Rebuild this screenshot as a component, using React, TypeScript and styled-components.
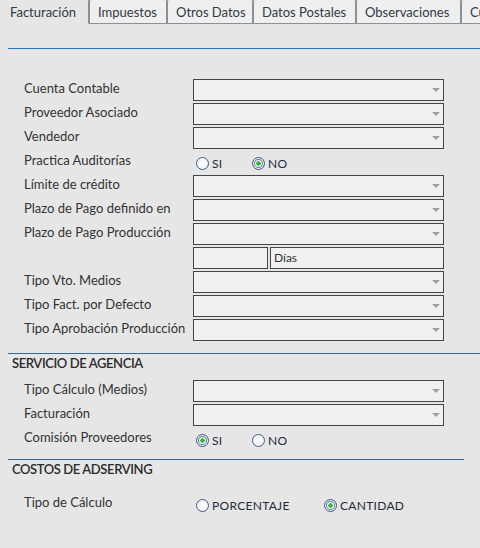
import React from 'react'
import styled, { createGlobalStyle } from 'styled-components'

const GlobalStyle = createGlobalStyle`
    body {
        margin: 0;
        background: #e6e6e6;
        font-family: Lato, "Open Sans", sans-serif;
        overflow: hidden;
    }
`

const Page = styled.div`
    width: 480px;
    height: 548px;
    background: #e6e6e6;
    color: #333;
`

const TabBar = styled.div`
    display: flex;
    height: 24px;
    overflow: hidden;
    white-space: nowrap;
`

const Tab = styled.div<{ $active?: boolean; $width: number }>`
    flex: none;
    box-sizing: border-box;
    width: ${p => p.$width}px;
    height: 27px;
    margin-top: -3px;
    padding: 5px 0 0 ${p => (p.$active ? 10 : 9)}px;
    font-size: 13px;
    line-height: 18px;
    color: #2f3a45;
    overflow: hidden;
    border: 1px solid #8a9097;
    border-left: none;
    border-top-right-radius: 5px;
    border-top-left-radius: ${p => (p.$active ? '0' : '5px')};
    border-bottom-color: ${p => (p.$active ? 'transparent' : '#8a9097')};
    background: ${p => (p.$active ? '#e6e6e6' : '#efefef')};
    box-shadow: ${p => (p.$active ? 'none' : 'inset 1px 0 0 0 #8a9097')};
`

const TabFiller = styled.div`
    flex: 1;
    border-bottom: 1px solid #8a9097;
`

const Panel = styled.div`
    padding: 24px 0 0 8px;
`

const Rule = styled.div<{ $width?: number }>`
    height: 0;
    border-top: 1px solid ${p => (p.$width ? '#2d6a98' : '#1f78c8')};
    width: ${p => (p.$width ? `${p.$width}px` : 'auto')};
`

const Spacer = styled.div<{ $h: number }>`
    height: ${p => p.$h}px;
`

const Form = styled.div`
    display: flex;
    flex-direction: column;
    padding-top: 30px;
`

const Row = styled.div`
    display: grid;
    grid-template-columns: 169px 251px;
    align-items: center;
    height: 22px;
    margin-bottom: 2px;
    padding-left: 16px;
`

const Label = styled.div`
    font-size: 13px;
    color: #333;
    margin-top: -4px;
    white-space: nowrap;
`

const Select = styled.div`
    position: relative;
    box-sizing: border-box;
    height: 22px;
    border: 1px solid #444;
    background: #f0f0f0;
`

const Arrow = styled.span`
    position: absolute;
    right: 3px;
    top: 8px;
    width: 0;
    height: 0;
    border-left: 4px solid transparent;
    border-right: 4px solid transparent;
    border-top: 4px solid #a0a0a0;
`

const Split = styled.div`
    display: grid;
    grid-template-columns: 75px 1fr;
    gap: 2px;
`

const TextBox = styled.div`
    box-sizing: border-box;
    height: 22px;
    border: 1px solid #444;
    background: #f0f0f0;
    font-size: 12px;
    line-height: 20px;
    padding-left: 3px;
    color: #333;
`

const RadioGroup = styled.div`
    display: flex;
    align-items: center;
    padding-left: 3px;
    margin-top: 2px;
`

const RadioItem = styled.label<{ $width: number }>`
    display: flex;
    align-items: center;
    width: ${p => p.$width}px;
    font-size: 12px;
    color: #1f2c3c;
    letter-spacing: 0.3px;
`

const Circle = styled.span<{ $on?: boolean }>`
    box-sizing: border-box;
    width: 13px;
    height: 13px;
    margin-right: 3px;
    border-radius: 50%;
    border: 1px solid #3d5d86;
    background: radial-gradient(circle, ${p => (p.$on ? '#3bb43b 0 2px, #ffffff 2.5px' : '#ffffff 0')} , #e9eef4 100%);
    box-shadow: ${p => (p.$on ? 'inset 0 0 0 1px #fff, inset 0 0 0 2px #5a7aa0' : 'none')};
`

const SectionTitle = styled.div`
    font-size: 13px;
    font-weight: 600;
    letter-spacing: -0.4px;
    color: #2b2b2b;
    line-height: 18px;
    padding-left: 4px;
    margin-bottom: 8px;
`

const Radio: React.FC<{ label: string; on?: boolean; width: number }> = ({ label, on, width }) => (
    <RadioItem $width={width}>
        <Circle $on={on} />
        {label}
    </RadioItem>
)

const Combo: React.FC = () => (
    <Select>
        <Arrow />
    </Select>
)

const FieldRow: React.FC<{ label: string }> = ({ label }) => (
    <Row>
        <Label>{label}</Label>
        <Combo />
    </Row>
)

const tabs: [string, number][] = [
    ['Facturación', 89],
    ['Impuestos', 78],
    ['Otros Datos', 86],
    ['Datos Postales', 103],
    ['Observaciones', 105],
    ['Cuentas', 80],
]

const App: React.FC = () => {
    return (
        <Page>
            <GlobalStyle />
            <TabBar>
                {tabs.map(([t, w], i) => (
                    <Tab key={t} $active={i === 0} $width={w}>{t}</Tab>
                ))}
                <TabFiller />
            </TabBar>
            <Panel>
                <Rule />
                <Form>
                    <FieldRow label="Cuenta Contable" />
                    <FieldRow label="Proveedor Asociado" />
                    <FieldRow label="Vendedor" />
                    <Row>
                        <Label>Practica Auditorías</Label>
                        <RadioGroup>
                            <Radio label="SI" width={56} />
                            <Radio label="NO" on width={60} />
                        </RadioGroup>
                    </Row>
                    <FieldRow label="Límite de crédito" />
                    <FieldRow label="Plazo de Pago definido en" />
                    <FieldRow label="Plazo de Pago Producción" />
                    <Row>
                        <Label />
                        <Split>
                            <TextBox />
                            <TextBox>Días</TextBox>
                        </Split>
                    </Row>
                    <FieldRow label="Tipo Vto. Medios" />
                    <FieldRow label="Tipo Fact. por Defecto" />
                    <FieldRow label="Tipo Aprobación Producción" />
                </Form>
                <Spacer $h={10} />
                <Rule $width={472} />
                <SectionTitle>SERVICIO DE AGENCIA</SectionTitle>
                <FieldRow label="Tipo Cálculo (Medios)" />
                <FieldRow label="Facturación" />
                <Row>
                    <Label>Comisión Proveedores</Label>
                    <RadioGroup>
                        <Radio label="SI" on width={56} />
                        <Radio label="NO" width={60} />
                    </RadioGroup>
                </Row>
                <Spacer $h={7} />
                <Rule $width={456} />
                <SectionTitle>COSTOS DE ADSERVING</SectionTitle>
                <Spacer $h={7} />
                <Row>
                    <Label>Tipo de Cálculo</Label>
                    <RadioGroup>
                        <Radio label="PORCENTAJE" width={128} />
                        <Radio label="CANTIDAD" on width={120} />
                    </RadioGroup>
                </Row>
            </Panel>
        </Page>
    )
}

export default App
